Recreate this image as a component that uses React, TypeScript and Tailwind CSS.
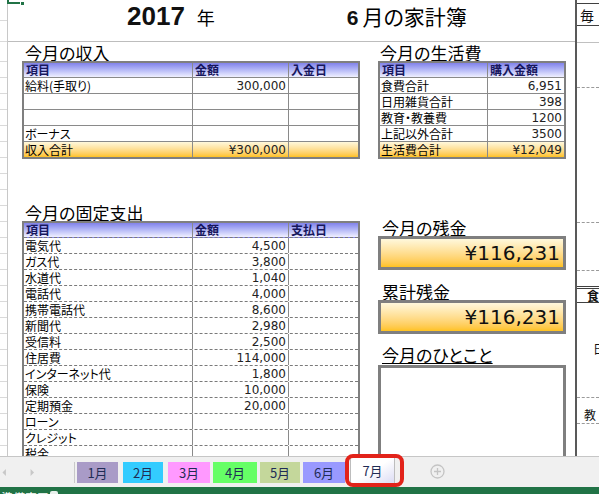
import React from "react";

const JP = "font-['Noto_Sans_CJK_JP',sans-serif] [font-feature-settings:'palt']";
const NUM = "font-['DejaVu_Sans',sans-serif]";
const HEAD = "bg-linear-to-b from-[#8282ea] to-[#f0f0ff]";
const GOLD = "bg-linear-to-b from-[#fff8dc] to-[#ffc21a]";

type Cell = { t?: string; n?: boolean };

function DataTable({
  widths,
  header,
  rows,
  total,
  dashed,
}: {
  widths: string[];
  header: string[];
  rows: Cell[][];
  total?: Cell[];
  dashed?: boolean;
}) {
  const line = dashed
    ? "border-b border-dashed border-[#7a7a7a]"
    : "border-b border-[#8a8a8a]";
  const allRows = total ? [...rows, total] : rows;
  return (
    <div className="border-2 border-[#7f7f7f] flex flex-col bg-white">
      <div className={`flex h-[15px] ${line} ${HEAD}`}>
        {header.map((h, i) => (
          <div
            key={i}
            className={`${widths[i]} flex items-center pl-[2px] ${
              i < header.length - 1 ? "border-r border-[#8a8a8a]" : ""
            } ${JP} text-[12px] leading-none font-bold text-[#17175e]`}
          >
            {h}
          </div>
        ))}
      </div>
      {allRows.map((r, ri) => {
        const isLast = ri === allRows.length - 1;
        const isTotal = total && isLast;
        return (
          <div
            key={ri}
            className={`flex ${isLast && !dashed ? "h-[15px]" : `h-[16px] ${line}`} ${
              isTotal ? GOLD : ""
            }`}
          >
            {r.map((c, ci) => (
              <div
                key={ci}
                className={`${widths[ci]} flex items-center ${
                  ci < r.length - 1 ? "border-r border-[#8a8a8a]" : ""
                } ${
                  c.n
                    ? `justify-end pr-[2px] ${NUM} text-[12px] text-[#222]`
                    : `pl-[1px] ${JP} text-[12px] text-black`
                } leading-none whitespace-nowrap`}
              >
                {c.t}
              </div>
            ))}
          </div>
        );
      })}
    </div>
  );
}

const W3 = ["w-[169px] shrink-0", "w-[96px] shrink-0", "w-[69px] shrink-0"];
const W2 = ["w-[108px] shrink-0", "w-[76px] shrink-0"];

const fixedRows: [string, string][] = [
  ["電気代", "4,500"],
  ["ガス代", "3,800"],
  ["水道代", "1,040"],
  ["電話代", "4,000"],
  ["携帯電話代", "8,600"],
  ["新聞代", "2,980"],
  ["受信料", "2,500"],
  ["住居費", "114,000"],
  ["インターネット代", "1,800"],
  ["保険", "10,000"],
  ["定期預金", "20,000"],
  ["ローン", ""],
  ["クレジット", ""],
  ["税金", ""],
];

const colAHeights = [
  "h-[21px]", "h-[21px]", "h-[20px]", "h-[16px]", "h-[16px]", "h-[16px]", "h-[16px]",
  "h-[16px]", "h-[16px]", "h-[16px]", "h-[16px]", "h-[16px]", "h-[16px]", "h-[16px]",
  "h-[16px]", "h-[16px]", "h-[16px]", "h-[16px]", "h-[16px]", "h-[16px]", "h-[16px]",
  "h-[16px]", "h-[16px]", "h-[16px]", "h-[16px]", "h-[16px]", "h-[16px]", "h-[16px]",
];

function BigBox() {
  return (
    <div
      className={`h-[34px] border-[3px] border-[#7f7f7f] ${GOLD} flex items-center justify-end pr-[3px] ${NUM} text-[20px] leading-none text-[#111]`}
    >
      ¥116,231
    </div>
  );
}

const tabs = [
  { t: "1月", c: "bg-[#a99bc7] w-[41px] ml-[2px]" },
  { t: "2月", c: "bg-[#33ccff] w-[40px] ml-[5px]" },
  { t: "3月", c: "bg-[#ff99ff] w-[42px] ml-[5px]" },
  { t: "4月", c: "bg-[#66ff66] w-[44px] ml-[3px]" },
  { t: "5月", c: "bg-[#c4d79b] w-[40px] ml-[3px]" },
  { t: "6月", c: "bg-[#9999ff] w-[42px] ml-[3px]" },
];

export default function App() {
  return (
    <div className="w-[599px] h-[494px] bg-white overflow-hidden relative flex flex-col">
      {/* sheet */}
      <div className="h-[457px] flex overflow-hidden border-b border-[#c6c6c6] shrink-0">
        {/* column A */}
        <div className="w-[8px] shrink-0 border-r border-[#c8c8c8] flex flex-col">
          {colAHeights.map((h, i) => (
            <div key={i} className={`${h} shrink-0 border-b border-[#dadada]`} />
          ))}
        </div>

        {/* main */}
        <div className="w-[567px] shrink-0 flex flex-col">
          <div className="h-[42px] shrink-0 border-b border-[#bdbdbd] flex items-baseline pl-[119px] pt-[3px]">
            <span className="font-['Liberation_Sans',sans-serif] font-bold text-[26px] leading-none text-[#111]">
              2017
            </span>
            <span className={`${JP} ml-[12px] text-[18px] leading-none`}>年</span>
            <span className="font-['Liberation_Sans',sans-serif] font-bold text-[21px] leading-none ml-[132px] text-[#111]">
              6
            </span>
            <span className={`${JP} ml-[4px] text-[21px] leading-none`}>月の家計簿</span>
          </div>

          <div className="flex pl-[14px]">
            <div className="w-[338px] shrink-0 flex flex-col">
              <div className={`h-[19px] flex items-end pl-[3px] ${JP} text-[17px] leading-[17px]`}>
                今月の収入
              </div>
              <DataTable
                widths={W3}
                header={["項目", "金額", "入金日"]}
                rows={[
                  [{ t: "給料(手取り)" }, { t: "300,000", n: true }, {}],
                  [{}, {}, {}],
                  [{}, {}, {}],
                  [{ t: "ボーナス" }, {}, {}],
                ]}
                total={[{ t: "収入合計" }, { t: "¥300,000", n: true }, {}]}
              />
            </div>
            <div className="ml-[18px] w-[188px] shrink-0 flex flex-col">
              <div className={`h-[19px] flex items-end pl-[2px] ${JP} text-[17px] leading-[17px]`}>
                今月の生活費
              </div>
              <DataTable
                widths={W2}
                header={["項目", "購入金額"]}
                rows={[
                  [{ t: "食費合計" }, { t: "6,951", n: true }],
                  [{ t: "日用雑貨合計" }, { t: "398", n: true }],
                  [{ t: "教育・教養費" }, { t: "1200", n: true }],
                  [{ t: "上記以外合計" }, { t: "3500", n: true }],
                ]}
                total={[{ t: "生活費合計" }, { t: "¥12,049", n: true }]}
              />
            </div>
          </div>

          <div className="flex pl-[14px] mt-[45px]">
            <div className="w-[338px] shrink-0 flex flex-col">
              <div className={`h-[17px] flex items-end pl-[3px] ${JP} text-[17px] leading-[17px]`}>
                今月の固定支出
              </div>
              <DataTable
                widths={W3}
                dashed
                header={["項目", "金額", "支払日"]}
                rows={fixedRows.map(([a, b]) => [{ t: a }, { t: b, n: true }, {}])}
              />
            </div>
            <div className="ml-[18px] w-[188px] shrink-0 flex flex-col pt-[15px]">
              <div className={`h-[17px] pl-[4px] ${JP} text-[17px] leading-[17px] underline underline-offset-[1px]`}>
                今月の残金
              </div>
              <BigBox />
              <div className={`mt-[14px] h-[16px] pl-[4px] ${JP} text-[17px] leading-[16px] underline underline-offset-[1px]`}>
                累計残金
              </div>
              <BigBox />
              <div className={`mt-[12px] h-[18px] pl-[4px] ${JP} text-[17px] leading-[17px] underline underline-offset-[1px]`}>
                今月のひとこと
              </div>
              <div className="mt-[1px] h-[110px] border-[3px] border-[#7f7f7f] bg-white" />
            </div>
          </div>
        </div>

        {/* right panel */}
        <div className={`w-[24px] shrink-0 border-l-2 border-[#595959] flex flex-col ${JP} text-[12px] text-[#111]`}>
          <div className="h-[3px] shrink-0" />
          <div className="h-[23px] shrink-0 border-y border-[#404040] flex items-center pl-[3px] text-[14px] leading-none whitespace-nowrap">
            毎
          </div>
          <div className="h-[17px] shrink-0 border-b border-[#c0c0c0]" />
          <div className="h-[45px] shrink-0 border-b border-dashed border-[#9a9a9a]" />
          <div className="h-[135px] shrink-0 border-b border-dashed border-[#9a9a9a]" />
          <div className="h-[48px] shrink-0 border-b border-dashed border-[#9a9a9a]" />
          <div className="h-[15px] shrink-0" />
          <div className="h-[17px] shrink-0 border-t-[3px] border-double border-b border-[#404040] pl-[10px] font-bold leading-[13px] whitespace-nowrap">
            食
          </div>
          <div className="h-[95px] shrink-0 border-b border-dashed border-[#9a9a9a] pl-[16px] pt-[40px] leading-[12px] whitespace-nowrap">
            日
          </div>
          <div className="h-[26px] shrink-0 border-b border-dashed border-[#9a9a9a] pl-[7px] pt-[11px] leading-[12px] whitespace-nowrap">
            教
          </div>
          <div className="flex-1" />
        </div>
      </div>

      {/* tab bar */}
      <div className="h-[30px] shrink-0 bg-[#f0f0f0] flex items-end pb-[4px]">
        <div className="w-[75px] h-[21px] shrink-0 border-r border-[#c8c8c8] flex items-center">
          <svg width="75" height="21" viewBox="0 0 75 21">
            <path d="M6 7 L2.5 10.5 L6 14 Z" fill="#c8c8c8" />
            <path d="M31 7 L34.5 10.5 L31 14 Z" fill="#c8c8c8" />
          </svg>
        </div>
        {tabs.map((tb) => (
          <div
            key={tb.t}
            className={`${tb.c} h-[21px] shrink-0 flex items-center justify-center ${JP} text-[13px] leading-none text-[#1f2c55]`}
          >
            {tb.t}
          </div>
        ))}
        <div
          className={`w-[45px] ml-[5px] h-[26px] shrink-0 border-x border-[#bdbdbd] bg-linear-to-br from-white via-white to-[#dcdcf4] flex items-center justify-center ${JP} text-[13px] leading-none text-[#1f2c55]`}
        >
          7月
        </div>
        <div className="ml-[35px] self-center mt-[2px] w-[15px] h-[15px] shrink-0">
          <svg width="15" height="15" viewBox="0 0 15 15">
            <circle cx="7.5" cy="7.5" r="6.5" fill="none" stroke="#c4c4c4" strokeWidth="1.3" />
            <path d="M7.5 4 V11 M4 7.5 H11" stroke="#c4c4c4" strokeWidth="1.3" />
          </svg>
        </div>
      </div>

      {/* status bar */}
      <div className="h-[7px] shrink-0 bg-[#217346] overflow-hidden flex items-start">
        <span className={`${JP} text-white text-[12px] leading-[12px] mt-[5px] ml-[1px] whitespace-nowrap`}>
          準備完了
        </span>
        <span className="ml-[1px] mt-[4px] w-[8px] h-[6px] bg-white rounded-t-[2px] opacity-90" />
      </div>

      {/* overlays */}
      <div className="absolute left-[7px] top-0 w-[2px] h-[4px] bg-[#217346]" />
      <div className="absolute left-[7px] top-[2px] w-[13px] h-[2px] bg-[#217346]" />
      <div className="absolute left-[20px] top-[1px] w-[5px] h-[5px] bg-[#217346] border border-white" />
      <div className="absolute left-[345px] top-[454px] w-[59px] h-[33px] border-[4px] border-[#e2231a] rounded-[8px]" />
    </div>
  );
}
